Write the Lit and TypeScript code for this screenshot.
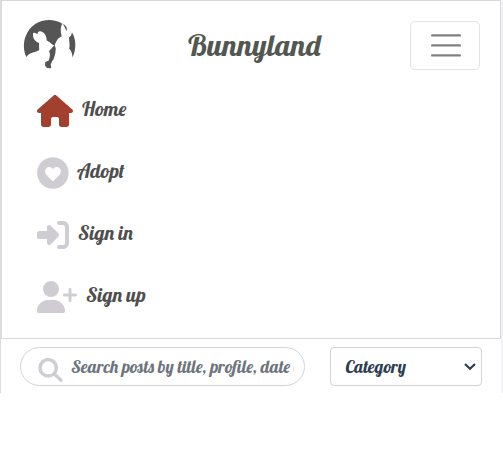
import { LitElement, html, svg, css } from "lit";
import { customElement } from "lit/decorators.js";

const house = svg`<path d="M575.8 255.5c0 18-15 32.1-32 32.1h-32l.7 160.2c0 2.7-.2 5.4-.5 8.1V472c0 22.1-17.9 40-40 40H456c-1.1 0-2.2 0-3.3-.1c-1.4 .1-2.8 .1-4.2 .1H416 392c-22.1 0-40-17.9-40-40V448 384c0-17.7-14.3-32-32-32H256c-17.7 0-32 14.3-32 32v64 24c0 22.1-17.9 40-40 40H160 128.1c-1.5 0-3-.1-4.5-.2c-1.2 .1-2.4 .2-3.6 .2H104c-22.1 0-40-17.9-40-40V360c0-.9 0-1.9 .1-2.8V287.6H32c-18 0-32-14-32-32.1c0-9 3-17 10-24L266.4 8c7-7 15-8 22-8s15 2 21 7L564.8 231.5c8 7 12 15 11 24z"/>`;
const heart = svg`<path fill-rule="evenodd" d="M254 4a252 252 0 1 1 0 504a252 252 0 1 1 0-504zM243 380c7 7 17 7 24 0l93-98c29-31 27-82-5-109c-28-23-67-17-91 9l-9 10l-9-10c-24-26-63-32-91-9c-32 27-34 78-5 109z"/>`;
const enter = svg`<path d="M217.9 105.9L340.7 228.7c7.2 7.2 11.3 17.1 11.3 27.3s-4.1 20.1-11.3 27.3L217.9 406.1c-6.4 6.4-15 9.9-24 9.9c-18.7 0-33.9-15.2-33.9-33.9l0-62.1L32 320c-17.7 0-32-14.3-32-32l0-64c0-17.7 14.3-32 32-32l128 0 0-62.1c0-18.7 15.2-33.9 33.9-33.9c9 0 17.6 3.6 24 9.9zM352 480l64 0c53 0 96-43 96-96l0-256c0-53-43-96-96-96l-64 0c-17.7 0-32 14.3-32 32s14.3 32 32 32l64 0c17.7 0 32 14.3 32 32l0 256c0 17.7-14.3 32-32 32l-64 0c-17.7 0-32 14.3-32 32s14.3 32 32 32z"/>`;
const userPlus = svg`<path d="M96 128a128 128 0 1 1 256 0A128 128 0 1 1 96 128zM0 482.3C0 383.8 79.8 304 178.3 304h91.4C368.2 304 448 383.8 448 482.3c0 16.4-13.3 29.7-29.7 29.7H29.7C13.3 512 0 498.7 0 482.3zM504 312V248H440c-13.3 0-24-10.7-24-24s10.7-24 24-24h64V136c0-13.3 10.7-24 24-24s24 10.7 24 24v64h64c13.3 0 24 10.7 24 24s-10.7 24-24 24H552v64c0 13.3-10.7 24-24 24s-24-10.7-24-24z"/>`;

@customElement("app-root")
export class AppRoot extends LitElement {
  static styles = css`
    :host { display: block; width: 503px; height: 460px; overflow: hidden; background: #fff;
      font: 400 20px/25px Lobster, "Liberation Serif", serif; }
    * { box-sizing: border-box; }
    .page { width: 503px; height: 393px; border-left: 1px solid #dcdce0; border-right: 2px solid #f3f3f5; }
    .header { height: 339px; border: 1px solid #d9d9dd; }
    .bar { display: flex; align-items: flex-start; height: 93px; padding: 18px 20px 0 21px; }
    .logo { display: block; flex: none; width: 54px; height: 52px; margin-top: -1px; }
    .brand { color: #50584f; font-size: 30px; line-height: 38px; margin: 7px 0 0 111px; }
    .toggler { display: flex; flex-direction: column; align-items: center; width: 70px; height: 49px;
      margin: 2px 0 0 auto; padding: 12px 0 0 1px; background: #fff; border: 1px solid #e3e3e3; border-radius: 5px; }
    .bars { display: block; width: 30px; height: 24px; }
    .nav { display: flex; flex-direction: column; gap: 30px; padding: 1px 0 0 35px; }
    .link { display: flex; height: 32px; color: #4f4f4f; text-decoration: none; white-space: nowrap; }
    .icon { display: block; height: 32px; fill: #cfcdd3; }
    .current .icon { fill: #a33f2f; }
    .label { margin: 1px 0 0 9px; }
    .round .label { margin-left: 8px; }
    .filters { display: flex; gap: 25px; padding: 8px 0 0 19px; }
    .search { display: flex; width: 285px; height: 39px; padding: 10px 10px 0 16px; border: 1px solid #ced4da;
      border-radius: 20px; color: #6c757d; overflow: hidden; }
    .lens { display: block; flex: none; width: 27px; height: 27px; margin-right: 7px; }
    .placeholder { flex: none; width: 223px; height: 28px; overflow: hidden; white-space: nowrap; margin-top: -4px; font-size: 17.5px; }
    .select { display: flex; justify-content: space-between; width: 152px; height: 39px; padding: 6px 5px 0 14.5px;
      border: 1px solid #ced4da; border-radius: 4px; color: #2c3e50; font-size: 17.5px; }
    .chevron { display: block; width: 12px; height: 8px; margin-top: 9px; }
  `;

  private links = [
    { label: "Home", kind: "current", box: 576, icon: house },
    { label: "Adopt", kind: "round", box: 512, icon: heart },
    { label: "Sign in", kind: "", box: 512, icon: enter },
    { label: "Sign up", kind: "", box: 640, icon: userPlus },
  ];

  render() {
    return html`
      <div class="page">
        <header class="header">
          <div class="bar">
            <svg class="logo" viewBox="23 18 54 52" fill="#555">
              <path d="M26.300 57C23.300 50.500 23 42 26 35.500C30 25.500 39 20 49 20C54 20 58.500 21.300 62.300 23.700C60.300 27 60.300 31 61.700 36.500C58 37.500 56.300 41 54.500 45.700C51.500 44.200 49.500 41.500 46.700 40.500C46.800 36 44 31.500 40 31.300C38 31.300 37.700 33 37.500 34.300C36 33 33.300 32 33 33.500C32.500 38.500 35.500 42 39.200 43C38.800 45.500 39.300 47.500 39.200 50C36 52.700 30 51.500 26.300 57Z"/>
              <path d="M54.500 45L55.800 48.500L55.300 53.500L53.700 59L52 61.500L50.700 64.500L51.300 68.200L47 68L45 65.500L45.300 62L48.800 60.500L49.700 57L50 54L49 51L51.500 48.500Z"/>
              <path d="M71.900 32.300C76.800 40 76 50.500 72.500 57.500C72.300 53.500 71.500 51 69.200 48.500C70.300 45.500 69 42 69 37.300C70.800 36.500 71.500 35 71.900 32.300ZM62.800 24C66 25.500 68 28 66.300 31C65.500 28.500 64.500 26.500 62.800 24Z"/>
            </svg>
            <span class="brand">Bunnyland</span>
            <button class="toggler" aria-label="Menu">
              <svg class="bars" viewBox="0 0 30 24" stroke="#808080" stroke-width="2.400" stroke-linecap="round">
                <path d="M1.200 1.400H28.800M1.200 11.400H28.800M1.200 21.400H28.800"/>
              </svg>
            </button>
          </div>
          <nav class="nav">
            ${this.links.map((l) => html`
              <a class="link ${l.kind}">
                <svg class="icon" width=${l.box / 16} viewBox="0 0 ${l.box} 512">${l.icon}</svg>
                <span class="label">${l.label}</span>
              </a>`)}
          </nav>
        </header>
        <div class="filters">
          <div class="search">
            <svg class="lens" viewBox="0 0 27 27" fill="none" stroke="#cfcdd3" stroke-width="3.400" stroke-linecap="round">
              <circle cx="11.200" cy="9.800" r="8.200"/><path d="M17.300 16L24 22.300"/>
            </svg>
            <div class="placeholder">Search posts by title, profile, date o</div>
          </div>
          <div class="select">
            <span>Category</span>
            <svg class="chevron" viewBox="0 0 12 8" fill="none" stroke="#2c3e50" stroke-width="2.200"><path d="M1 1L6 5.800L11 1"/></svg>
          </div>
        </div>
      </div>`;
  }
}
